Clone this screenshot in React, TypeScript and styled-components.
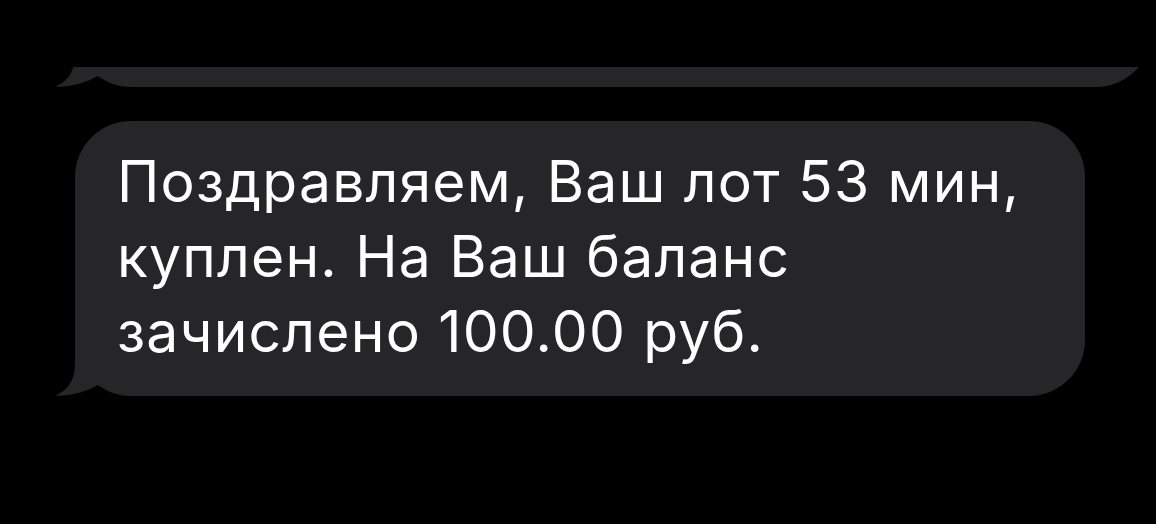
import styled, { createGlobalStyle } from "styled-components";

const GlobalStyle = createGlobalStyle`
  html, body {
    margin: 0;
    padding: 0;
    background: #000;
  }
  body {
    font-family: Inter, "Noto Sans", sans-serif;
  }
`;

const bubbleColor = "#262628";

const Screen = styled.div`
  display: flex;
  flex-direction: column;
  gap: 34px;
  width: 1156px;
  height: 524px;
  padding-top: 67px;
  box-sizing: border-box;
  background: #000;
  overflow: hidden;
`;

// only the lower edge of the previous message is on screen
const Clip = styled.div`
  display: flex;
  align-items: flex-end;
  height: 20px;
  overflow: hidden;
`;

const Bubble = styled.div<{ $width: number }>`
  position: relative;
  width: ${(p) => p.$width}px;
  margin-left: 75px;
  box-sizing: border-box;
  padding: 23px 30px 27px 42px;
  border-radius: 56px;
  background: ${bubbleColor};
  flex-shrink: 0;
`;

const EmptyBubble = styled(Bubble)`
  height: 140px;
`;

const Text = styled.p`
  margin: 0;
  color: #fff;
  font-family: Inter, "Noto Sans", sans-serif;
  font-size: 57px;
  line-height: 75px;
  letter-spacing: 1.2px;
  white-space: nowrap;
`;

const TailSvg = styled.svg`
  position: absolute;
  left: -20px;
  bottom: 0;
  width: 60px;
  height: 60px;
  display: block;
`;

function Tail() {
  return (
    <TailSvg viewBox="0 0 60 60" aria-hidden>
      <path
        d="M20,0 L20,28 C20,45 12,55 0,59.5 C15,60.5 32,56 44,48 L52,40 L52,0 Z"
        fill={bubbleColor}
      />
    </TailSvg>
  );
}

export default function App() {
  return (
    <>
      <GlobalStyle />
      <Screen>
        <Clip>
          <EmptyBubble $width={1077}>
            <Tail />
          </EmptyBubble>
        </Clip>
        <Bubble $width={1010}>
          <Text>
            Поздравляем, Ваш лот 53 мин,
            <br />
            куплен. На Ваш баланс
            <br />
            зачислено 100.00 руб.
          </Text>
          <Tail />
        </Bubble>
      </Screen>
    </>
  );
}
